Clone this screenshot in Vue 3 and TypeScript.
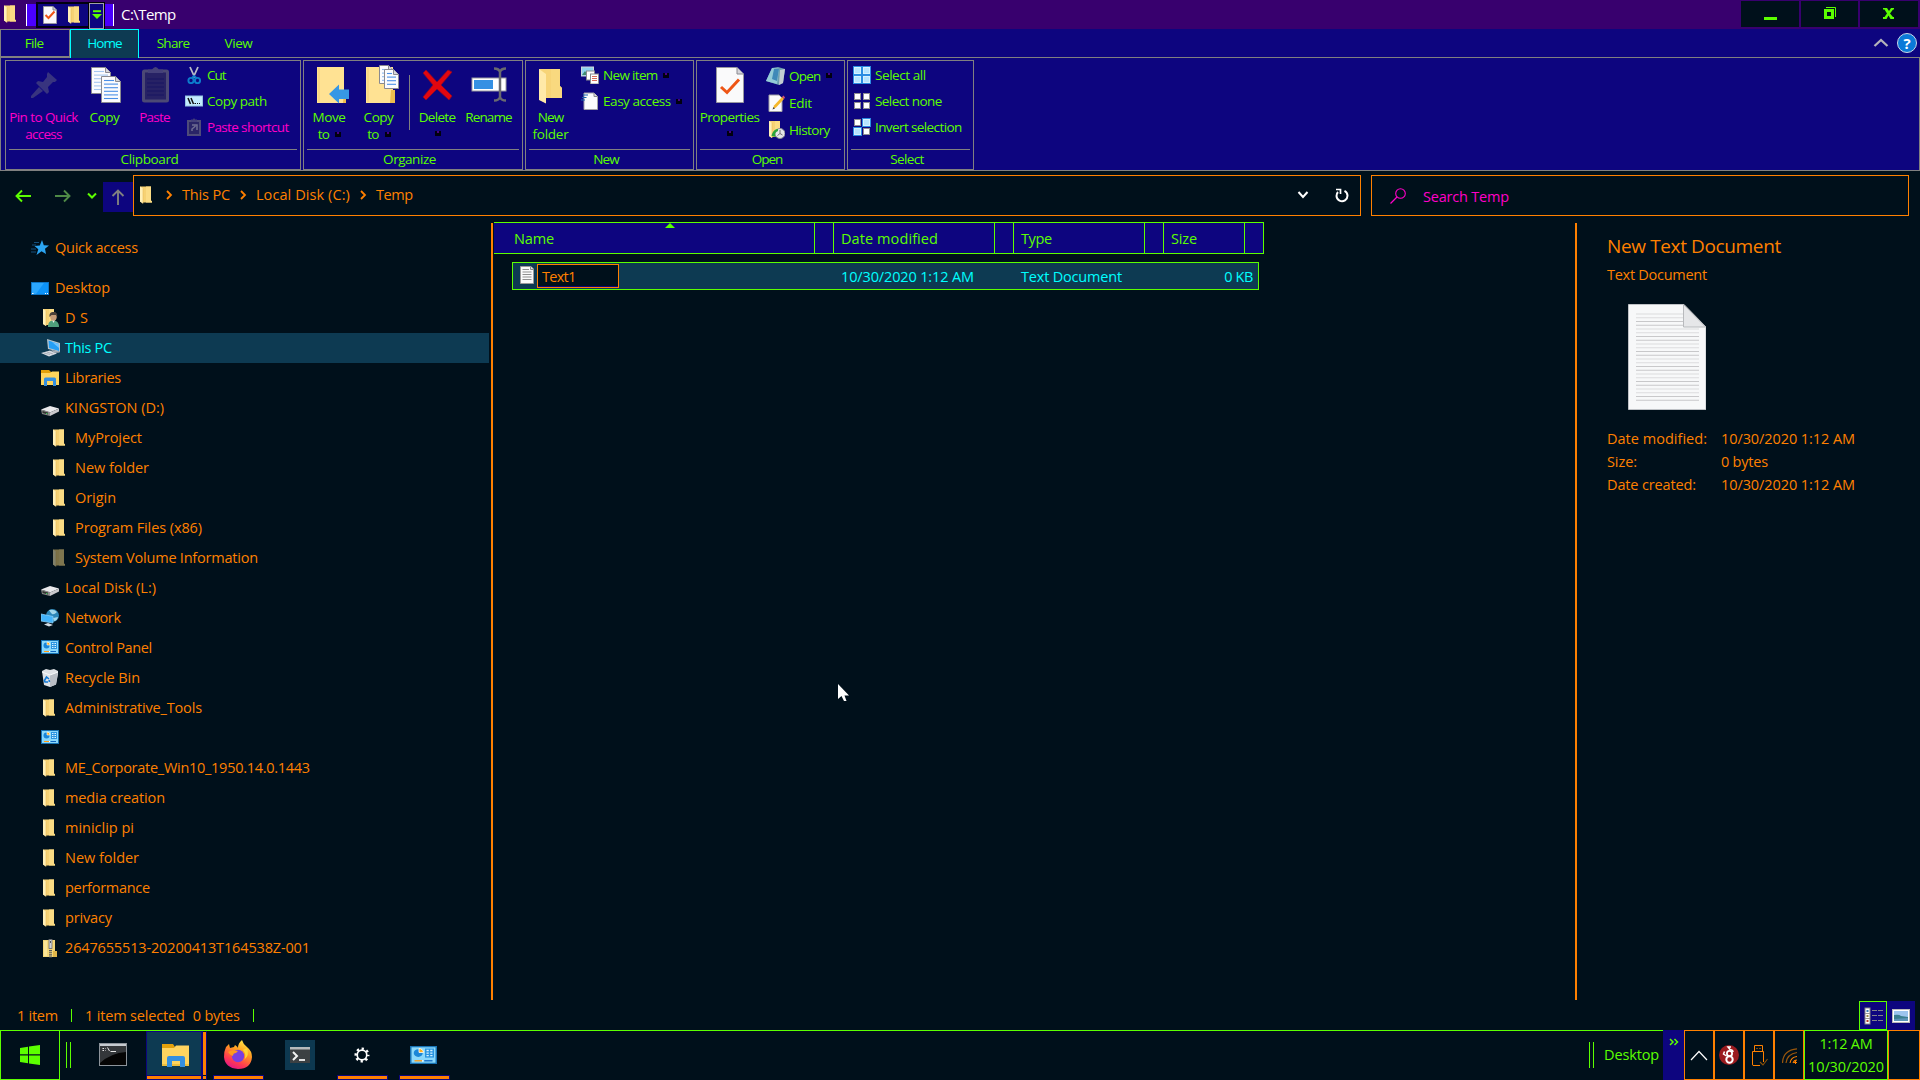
<script setup lang="ts">
import { h } from 'vue'

interface Art { w: number; h: number; body: string }

const folder = `<path d="M1 0H12V14L13 15V16H4V17L1 15Z" fill="#f6d274"/><path d="M7 0H12V14L13 15V16H7Z" fill="#fbdc84"/><path d="M1 0L4 2V17L1 15Z" fill="#fff0b8"/><path d="M4 2V17" stroke="#e9bd58" stroke-width=".6"/>`
const panel = `<rect width="18" height="14" fill="#1873b4"/><rect x="1" y="1" width="16" height="12" fill="#8ad8fb"/><circle cx="5.5" cy="5.5" r="3" fill="#1a86d8"/><path d="M6 5V2A3 3 0 0 1 9 5Z" fill="#ffae1a" stroke="#fff" stroke-width=".6"/><rect x="10" y="2" width="6" height="7" fill="#2a94e0"/><path d="M11 3.5h1.5M13.5 3.5H15M11 5.5h1.5M13.5 5.5H15M11 7.5h1.5M13.5 7.5H15" stroke="#d8f3ff"/><path d="M3 11.5H8" stroke="#ff9a10"/><path d="M8 11.5H9" stroke="#fff"/><path d="M9.500 11.500H15" stroke="#0f66c0"/>`
const drive = `<path d="M0 10.500L9 7L18 9.500L9 13.500Z" fill="#e9e9ec"/><path d="M0 10.500L9 13V17L1 15Z" fill="#8b8b8b"/><path d="M9 13.500L18 9.500V12.500L9 17Z" fill="#c9c9cd"/><path d="M1.500 12L7 13.500V15.500L1.500 14Z" fill="#303430"/><rect x="5" y="14" width="1.500" height="1" fill="#3fbf5a"/>`
const page = (x: number, y: number, w: number, hh: number, line: string) => {
  let s = `<path d="M${x} ${y}H${x + w - 5}L${x + w} ${y + 5}V${y + hh}H${x}Z" fill="#fbfbfd" stroke="#8a8a90"/><path d="M${x + w - 5} ${y}V${y + 5}H${x + w}" fill="#d6d6dc" stroke="#8a8a90"/>`
  for (let i = 0; i < 6; i++) {
    const ly = y + 4 + i * 3.6
    if (ly < y + hh - 1) s += `<path d="M${x + 2.5} ${ly}H${x + w - (i < 1 ? 6.5 : 2.5)}" stroke="${line}" stroke-width="1.100"/>`
  }
  return s
}
const sheetLines = Array.from({ length: 24 }, (_, i) =>
  `<path d="M8 ${10 + i * 3.75}H${i < 4 ? 55 : 71}" stroke="${i % 4 < 2 ? '#dcdcde' : '#c8c8ca'}" stroke-width="1.200"/>`).join('')
const pane = (x: number, y: number, on: boolean) => on
  ? `<rect x="${x}" y="${y}" width="9" height="9" fill="#2b8ce2"/><rect x="${x + 1.500}" y="${y + 1.500}" width="6" height="6" fill="#b6e4ff" stroke="#d4f1ff" stroke-width="1"/>`
  : `<rect x="${x + 1.500}" y="${y + 1.500}" width="6" height="6" fill="#fff" stroke="#8e8e92" stroke-width="1"/>`

const art: Record<string, Art> = {
  folder: { w: 18, h: 18, body: `<g transform="translate(1 0.500)">${folder}</g>` },
  sysfolder: { w: 18, h: 18, body: `<g transform="translate(1 0.500)" opacity=".5">${folder}</g>` },
  star: { w: 18, h: 18, body: `<path d="M11 1L12.800 6.300L18 6.500L14 9.700L15 15L10.500 12.200L5.500 16L7.300 10.300L3.500 7L8.800 6.500Z" fill="#2ba5f3"/><path d="M3 3.500H8M1 6H5M0 10H5M0 13H5" stroke="#1b5f96" stroke-width=".8"/>` },
  desktop: { w: 18, h: 18, body: `<rect x="0" y="3" width="18" height="13" fill="#0d74c4"/><rect x="1" y="4" width="16" height="11" fill="#0d93f8"/><path d="M1 4H13L5 15H1Z" fill="#2ba6fd"/><path d="M1 14.500H2.500M14 14.500H15M16 14.500H17" stroke="#fff"/>` },
  user: { w: 18, h: 18, body: `<g transform="translate(1 0)">${folder}</g><path d="M7 18C7 13 9 11.500 12.500 11.500S18 14 18 18Z" fill="#4e9e7c"/><path d="M11 11L12.500 14L14 11Z" fill="#e9f0ec"/><ellipse cx="12.500" cy="7.500" rx="3.300" ry="4.200" fill="#c69c78"/><path d="M8.500 8C8 4 10 3 12.500 3S17 5 16 8L15 6H10.500Z" fill="#4b4038"/>` },
  pc: { w: 20, h: 18, body: `<path d="M6 0L19 4V13L7 10Z" fill="#b9c6ce"/><path d="M7.500 1.500L18 5V12L8 9Z" fill="#259ff6"/><path d="M11 3L18 5V9Z" fill="#70c3ff"/><path d="M0 14L9 11.500L16 14.500L8 17.500Z" fill="#d8dbe2"/><path d="M10 11L17 12L19 13.500L13 14Z" fill="#a9b0b8"/><path d="M3 14L9 15.500M6 13L12 15" stroke="#8c949c" stroke-width=".6"/>` },
  library: { w: 18, h: 18, body: `<path d="M0 1H8L10 3H18V7H0Z" fill="#e2a10b"/><path d="M0 4H9L11 2.500H18V16H0Z" fill="#fdd45c"/><path d="M3 17V10Q3 8.500 4.500 8.500H13.500Q15 8.500 15 10V17H12V12H6V17Z" fill="#348fdf"/>` },
  drive: { w: 18, h: 18, body: drive },
  network: { w: 18, h: 18, body: `<circle cx="11.500" cy="6.500" r="6.500" fill="#2d87b8"/><path d="M8 1Q13 0 16 3Q13 6 11 5Q9 3 8 1M12 9L17 8Q16 12 13 12Z" fill="#a2d7ea"/><path d="M0 5L12 7.500V14L0 12Z" fill="#42b3fb"/><path d="M0 5L12 7.500V14L0 12Z" fill="none" stroke="#87cdf6" stroke-width=".8"/><path d="M3 15.500L7 14L12 16L8 17.500Z" fill="#d3dce4"/>` },
  panel: { w: 18, h: 18, body: `<g transform="translate(0 1)">${panel}</g>` },
  panelbig: { w: 27, h: 18, body: `<g transform="scale(1.500 1.286)">${panel}</g>` },
  bin: { w: 18, h: 18, body: `<path d="M1 2L5 0L9 1L13 0L17 2V5L15 15.500L9 18L3 16Z" fill="#dfe2e6"/><path d="M9 6L17 3L15 15.500L9 18Z" fill="#b9bec5"/><path d="M1 3L9 6L17 3" stroke="#f8fafb" stroke-width="1" fill="none"/><path d="M3.500 11.500L5.500 8L8 10M7 13H4L3 11M8 11L8.500 13" stroke="#1479d4" stroke-width="1.600" fill="none"/>` },
  zip: { w: 18, h: 19, body: `<rect x="2" y="1" width="12" height="17" fill="#f3d677"/><path d="M12 12H16V18H12Z" fill="#dfb54a"/><rect x="3" y="2" width="3" height="15" fill="#fbe597"/><path d="M9.500 9V19" stroke="#55565c" stroke-width="3" stroke-dasharray="1.100 1"/><rect x="8" y=".5" width="3" height="9" fill="#cfd2d6" stroke="#6b6d72" stroke-width=".8"/><path d="M9.500 2V4" stroke="#55565c"/>` },
  pin: { w: 40, h: 40, body: `<g fill="#38347f"><path d="M24 7L33 15L31 17H29L24 22L25 27L23 29L12 18L14 16L19 17L23 12V9Z"/><path d="M15 22L19 26L9 33L7 33L7 31Z"/></g>` },
  copy: { w: 40, h: 40, body: page(6.5, 2.5, 19, 26, '#a4c6f0') + page(16.5, 11.5, 19, 26, '#4b8fe6') },
  paste: { w: 40, h: 40, body: `<rect x="8.500" y="6" width="24" height="30" rx="1" fill="#272265" stroke="#4c4975" stroke-width="3"/><path d="M13 8V4.500H17Q20.500 -.5 24 4.500H28V8Z" fill="#45417a"/><path d="M12 14H29M12 18H29M12 22H29M12 26H29M12 30H29" stroke="#181462"/>` },
  move: { w: 40, h: 40, body: `<path d="M7 2H34V25H36V38H7Z" fill="#ffe293"/><path d="M34 25H36V38H33Z" fill="#edbd4e"/><path d="M9 3V37" stroke="#f6cf72" stroke-width="1"/><path d="M19 29L29 19.500V24.500H39V34H29V38.500Z" fill="#3797e4"/>` },
  copyto: { w: 40, h: 40, body: `<path d="M7 2H34V25H36V38H7Z" fill="#ffe293"/><path d="M32 25H36V38H31Z" fill="#edbd4e"/><path d="M9 3V37" stroke="#f6cf72"/>` + page(20.5, .5, 14, 18, '#8db8ee') + page(25.5, 4.5, 14, 19, '#4b8fe6') },
  del: { w: 40, h: 40, body: `<path d="M5 8L8 5L19 17L30 5L34 7L23 20L34 31L31 35L19 24L8 35L5 32L15 20Z" fill="#e3060f" stroke="#8c0a27" stroke-width=".8"/>` },
  rename: { w: 40, h: 40, body: `<rect x="3" y="13" width="34" height="13" fill="#fff" stroke="#9a9aa0"/><rect x="5" y="15" width="19" height="9" fill="#3590e3"/><path d="M25 3.500Q30 3.500 31 7Q32 3.500 37 3.500M31 6V32M25 35.500Q30 35.500 31 32Q32 35.500 37 35.500" fill="none" stroke="#696970" stroke-width="2.500"/>` },
  newfolder: { w: 40, h: 40, body: `<path d="M8 4H29V21L31 23V33H15V38L8 34Z" fill="#f7d477"/><path d="M20 4H29V21L31 23V33H20Z" fill="#f9d97f"/><path d="M8 4L15 9V38.500L8 35Z" fill="#ffe9a8"/>` },
  props: { w: 40, h: 40, body: `<path d="M6.500 2.500H27L33.500 9V37.500H6.500Z" fill="#fafafb" stroke="#9898a0"/><path d="M27 2.500V9H33.500" fill="#d4d4da" stroke="#8a8a90"/><path d="M11 22L17 27.500L29 14.500" fill="none" stroke="#ee5515" stroke-width="3"/>` },
  cut: { w: 18, h: 18, body: `<path d="M5 1L10 12M13 1L8 12" stroke="#b8bcc8" stroke-width="1.800"/><g fill="none" stroke="#0c7ccc" stroke-width="1.900"><circle cx="6" cy="14.500" r="2.600"/><circle cx="12.500" cy="14.500" r="2.600"/><path d="M7 12L9 10L11.500 12"/></g>` },
  path: { w: 18, h: 18, body: `<rect x=".5" y="4" width="17" height="10" fill="#c4ecff" stroke="#96c5e4"/><path d="M3 6L5.500 12M6 6L8.500 12" stroke="#111" stroke-width="1.500"/><path d="M9.500 11.500H11M12 11.500H13M14 11.500H15" stroke="#111"/>` },
  shortcut: { w: 18, h: 18, body: `<rect x="3" y="3" width="12" height="14" fill="#2a2567" stroke="#4e4b79" stroke-width="2"/><path d="M6 4V1.500H8L9 0L10 1.500H12V4Z" fill="#45417a"/><path d="M7 13V11L10.500 8M7 7H12V12" stroke="#6f6d92" stroke-width="1.500" fill="none"/>` },
  newitem: { w: 18, h: 18, body: `<rect x=".5" y="1" width="12" height="9" fill="#8fd2ee" stroke="#cfd6da"/><path d="M1 9L4 5L7 9Z" fill="#3f8a70"/><rect x="5.500" y="5" width="8" height="9" fill="#fff" stroke="#8a8a90"/><rect x="9.500" y="8" width="8" height="10" fill="#fff" stroke="#8a8a90"/><path d="M11 10.500H16M11 12.500H16M11 14.500H16" stroke="#d96a5a"/>` },
  easy: { w: 18, h: 18, body: `<path d="M3 1H13L16.500 4.500V17.500H3Z" fill="#fafbfc" stroke="#a0a0a6"/><path d="M13 1V4.500H16.500" fill="#ddd" stroke="#8a8a90"/><path d="M2 3H7M1 5.500H5.500M0 8H4" stroke="#1b62ad" stroke-width="1.200"/>` },
  open: { w: 20, h: 18, body: `<path d="M6 1L12 0L19 2L17 16L13 18L0 14Z" fill="#6d9fb0"/><path d="M6 1L13 2L11 17L0 14Z" fill="#94cbd8"/><path d="M8 2L13 2L11 14L6 12Z" fill="#3f89b8"/><path d="M14 3L19 2L17 16L13 18Z" fill="#c3cdd2"/>` },
  edit: { w: 18, h: 18, body: `<path d="M2 1H12L15 4V17.500H2Z" fill="#fafafb" stroke="#a0a0a6"/><path d="M6 15L7 11.500L15 3L17 5L9 13.500Z" fill="#f5b72a"/><path d="M15 3L16.500 1.500L18 3.500L17 5Z" fill="#d9536d"/><path d="M5.500 15.500L6.500 13L8 14.500Z" fill="#444"/>` },
  history: { w: 18, h: 18, body: `<g transform="translate(1 0)">${folder}</g><circle cx="13" cy="12.500" r="5" fill="#e4e6e8" stroke="#8a8e92"/><path d="M13 9V12.500L15.500 14M13 12.500L10.500 14.500" stroke="#666" stroke-width=".9" fill="none"/><path d="M5 13Q7 8 11 8V10Q8 11 8 14L9 16L4.500 15Z" fill="#2ca53a"/>` },
  selall: { w: 18, h: 18, body: pane(0, 0, true) + pane(9, 0, true) + pane(0, 9, true) + pane(9, 9, true) },
  selnone: { w: 18, h: 18, body: pane(0, 0, false) + pane(9, 0, false) + pane(0, 9, false) + pane(9, 9, false) },
  selinv: { w: 18, h: 18, body: pane(0, 0, false) + pane(9, 0, true) + pane(0, 9, true) + pane(9, 9, false) },
  propsmall: { w: 16, h: 18, body: `<path d="M1.500 .5H11L14.500 4V17.500H1.500Z" fill="#fafafb" stroke="#9898a0"/><path d="M11 .5V4H14.500" fill="#ccc" stroke="#8a8a90"/><path d="M3.500 9L6.500 12L12.500 5.500" fill="none" stroke="#ee5515" stroke-width="2"/>` },
  txt: { w: 14, h: 18, body: `<path d="M.5 .5H11L13.500 3V17.500H.5Z" fill="#fafafa" stroke="#9a9a9a"/><path d="M10.500 .5V3.500H13.500" fill="#ddd" stroke="#888"/><path d="M2.500 3.500H9M2.500 6H11.500M2.500 8.500H11.500M2.500 11H11.500M2.500 13.500H11.500" stroke="#8f8f8f"/>` },
  sheet: { w: 78, h: 106, body: `<path d="M.5 .5H56L78 23V105.500H.5Z" fill="#f7f8f9" stroke="#bfc2c6"/>${sheetLines}<path d="M55.500 .5L77.500 23H55.500Z" fill="#e6e7e9" stroke="#b8babd"/>` },
  cmd: { w: 28, h: 23, body: `<rect x=".5" y=".5" width="27" height="22" fill="#050505" stroke="#8d949b"/><rect x="1" y="1" width="26" height="2" fill="#c6cbd0"/><path d="M1 3H27V9Q12 10 1 20Z" fill="#34373a"/><path d="M3.500 5.500H5M3.500 7.500H5M6.500 5.500V6M6.500 7.500V8M8.500 4.500L10.500 8M11.500 8.500H17" stroke="#e8e8e8" stroke-width="1"/>` },
  explorer: { w: 28, h: 24, body: `<path d="M1 1H12L14 4H28V10H1Z" fill="#e2a10b"/><path d="M1 5H13L15 2.500H28V23H1Z" fill="#fed45f"/><path d="M1 21H28V23H1Z" fill="#eebf3d"/><path d="M6 24V15Q6 13 8 13H22Q24 13 24 15V24H19V18H11V24Z" fill="#348fdf"/>` },
  firefox: { w: 30, h: 30, body: `<defs><linearGradient id="ffa" x1=".8" y1="0" x2=".3" y2="1"><stop offset="0" stop-color="#fff14a"/><stop offset=".4" stop-color="#ff9a20"/><stop offset=".75" stop-color="#ff3b50"/><stop offset="1" stop-color="#e31587"/></linearGradient></defs><path d="M3 7L6 4L7 8L11 7L12 5Q15 7 15 8Q15 3 19 0Q20 4 24 7Q29 11 29 17Q28 29 15 29Q2 28 1 17Q1 11 3 7Z" fill="url(#ffa)"/><circle cx="15" cy="16" r="6.200" fill="#7a3fe0"/><path d="M5 12Q9 9 15 11L13 13Q10 13 10 16Q7 15 5 12Z" fill="#ff9a1e"/><path d="M20 10Q24 15 21 20Q27 15 24 8Z" fill="#ffd633"/>` },
  powershell: { w: 30, h: 30, body: `<rect width="30" height="30" fill="#0d3850"/><rect x="5" y="7" width="20" height="16" fill="#3c4043"/><rect x="5" y="7" width="20" height="2.500" fill="#b5b9bc"/><path d="M8 12L12 16L8 20" fill="none" stroke="#f2f2f2" stroke-width="2"/><path d="M14 20H20" stroke="#f2f2f2" stroke-width="1.800"/>` },
  gear: { w: 16, h: 16, body: `<circle cx="8" cy="8" r="4.800" fill="none" stroke="#fff" stroke-width="1.700"/><circle cx="8" cy="8" r="6.300" fill="none" stroke="#fff" stroke-width="2.400" stroke-dasharray="2.300 2.650" stroke-dashoffset="1.150"/>` },
  win: { w: 20, h: 20, body: `<path d="M0 3L8 1.800V9.300H0ZM9 1.600L20 0V9.300H9ZM0 10.500H8V18.200L0 17ZM9 10.500H20V20L9 18.400Z" fill="#5cff00"/>` },
  back: { w: 16, h: 14, body: `<path d="M16 7H2M7 1.500L1.500 7L7 12.500" fill="none" stroke="#5cff00" stroke-width="1.900"/>` },
  fwd: { w: 16, h: 14, body: `<path d="M0 7H14M9 1.500L14.500 7L9 12.500" fill="none" stroke="#4f8a46" stroke-width="1.900"/>` },
  down: { w: 10, h: 8, body: `<path d="M1 1.500L5 5.500L9 1.500" fill="none" stroke="#5cff00" stroke-width="2"/>` },
  up: { w: 14, h: 16, body: `<path d="M7 16V2M1.500 7L7 1.500L12.500 7" fill="none" stroke="#808080" stroke-width="1.900"/>` },
  crumb: { w: 7, h: 10, body: `<path d="M1 1L5 5L1 9" fill="none" stroke="#ff8000" stroke-width="1.800"/>` },
  drop: { w: 12, h: 10, body: `<path d="M1.500 2L6 7L10.500 2" fill="none" stroke="#fff" stroke-width="2"/>` },
  refresh: { w: 14, h: 15, body: `<path d="M3 4Q1.500 5.500 1.500 8A5.500 5.500 0 1 0 9.500 2.800" fill="none" stroke="#fff" stroke-width="2"/><path d="M1 1.500H5.500V6" fill="none" stroke="#fff" stroke-width="1.700"/>` },
  search: { w: 16, h: 16, body: `<circle cx="10.500" cy="5.500" r="4.800" fill="none" stroke="#ff00c8" stroke-width="1.100"/><path d="M7 9L.5 15.500" stroke="#ff00c8" stroke-width="1.200"/>` },
  qat: { w: 10, h: 9, body: `<path d="M1 1.200H9" stroke="#5cff00" stroke-width="2"/><path d="M0 4H10L5 9Z" fill="#5cff00"/>` },
  min: { w: 14, h: 14, body: `<path d="M1 11H14V14H1Z" fill="#5cff00"/>` },
  restore: { w: 13, h: 13, body: `<path d="M2 .5H11.500V10" fill="none" stroke="#5cff00"/><path d="M1.500 3.500H8.500V10.500H1.500Z" fill="none" stroke="#5cff00" stroke-width="3"/>` },
  close: { w: 12, h: 11, body: `<path d="M0 0H4L6 3L8 0H11V1.500H10L7 5.500L10 9H11V11H7.500L5.500 7.500L3.500 11H0V9H1.500L4 5.500L1.500 1.500H0Z" fill="#5cff00"/>` },
  caret: { w: 16, h: 10, body: `<path d="M1.500 8L8 2L14.500 8" fill="none" stroke="#b4b4ba" stroke-width="2.300"/>` },
  chev: { w: 18, h: 11, body: `<path d="M1 10L9 1.500L17 10" fill="none" stroke="#fff" stroke-width="1.200"/>` },
  more: { w: 10, h: 8, body: `<path d="M1 1L4 4L1 7M5.500 1L8.500 4L5.500 7" fill="none" stroke="#5cff00" stroke-width="1.500"/>` },
  swirl: { w: 20, h: 20, body: `<circle cx="10" cy="10" r="10" fill="#9b1b1f"/><circle cx="10.500" cy="14.500" r="3.200" fill="none" stroke="#fff" stroke-width="2"/><circle cx="10.500" cy="8.500" r="2.600" fill="none" stroke="#fff" stroke-width="1.800"/><path d="M12 2H9L11 4.500Q14 5 14 7M5.500 6.500L4.500 9L7.500 11" fill="none" stroke="#fff" stroke-width="1.500"/>` },
  usb: { w: 16, h: 21, body: `<path d="M2.500 6V.5H10.500V6M1 20.500Q.5 20.500 .5 19V6.500H11.500V17M1 20.500H8" fill="none" stroke="#ff8000"/><path d="M4.500 3.500H5.500M7.500 3.500H8.500" stroke="#ff8000"/><path d="M8 17L11 20L15.500 14" fill="none" stroke="#8d5208" stroke-width="1.100"/>` },
  wifi: { w: 16, h: 16, body: `<g fill="none" stroke="#9a570c" stroke-width="1.200"><path d="M.5 15Q1 2 15 .8M4 15Q5 6 15 4.500"/></g><path d="M8 15Q9 9 15 8.500M11 15Q12 12 15 12" fill="none" stroke="#ff8000" stroke-width="1.100"/><path d="M12 14.500H15M13.500 13V16" stroke="#ff8000"/>` },
  details: { w: 20, h: 18, body: `<g><rect x="1" y="1" width="5" height="16" fill="#fff" stroke="#888"/><path d="M1 6.500H6M1 11.500H6" stroke="#999"/><rect x="2.500" y="3" width="2" height="2" fill="#3a7fb8"/><rect x="2.500" y="8" width="2" height="2" fill="#9a8a4a"/><rect x="2.500" y="13" width="2" height="2" fill="#b03a2a"/></g><path d="M8 3.500H13M14 3.500H19M8 8.500H13M14 8.500H19M8 13.500H13M14 13.500H19" stroke="#82828c"/>` },
  thumb: { w: 18, h: 14, body: `<rect x=".5" y=".5" width="17" height="13" fill="#fff" stroke="#b8b8b8"/><rect x="2" y="2" width="14" height="10" fill="#9cc5ee"/><path d="M2 6Q7 5 9 7L16 8V12H2Z" fill="#3a7f8f"/><path d="M2 10L16 9V12H2Z" fill="#5c95b8"/>` },
  cursor: { w: 12, h: 18, body: `<path d="M0 0V15L3.500 12L6 17H8.500L6.500 11.500H11Z" fill="#fff"/>` },
}

// Renders one glyph from the table above at its own size.
const Ico = (p: { n: string }) => {
  const a = art[p.n]
  return h('svg', { width: a.w, height: a.h, viewBox: `0 0 ${a.w} ${a.h}`, 'aria-hidden': 'true', innerHTML: a.body })
}
Ico.props = ['n']

// Spreads a label's letters so that it takes up the given advance in pixels.
const vFit = {
  mounted(el: HTMLElement, { value }: { value: number }) {
    if (!value) return
    const range = document.createRange()
    range.selectNodeContents(el)
    const natural = range.getBoundingClientRect().width
    const count = (el.textContent ?? '').length
    if (count > 1) el.style.letterSpacing = `${((value - 1 - natural) / (count - 0.5)).toFixed(3)}px`
  },
}

type T = [string, number]
interface Big { icon: string; lines: T[]; width: number; off?: boolean; tick?: 'inline' | 'below'; sep?: boolean }
interface Small { icon: string; t: T; off?: boolean; tick?: boolean }
interface Group { title: T; width: number; pad: number; big: Big[]; gap: number; rowH: number; small: Small[] }

const groups: Group[] = [
  { title: ['Clipboard', 59], width: 296, pad: 0, gap: 3, rowH: 26,
    big: [
      { icon: 'pin', lines: [['Pin to Quick', 70], ['access', 38]], width: 76, off: true },
      { icon: 'copy', lines: [['Copy', 31]], width: 46 },
      { icon: 'paste', lines: [['Paste', 32]], width: 54, off: true },
    ],
    small: [
      { icon: 'cut', t: ['Cut', 20] },
      { icon: 'path', t: ['Copy path', 61] },
      { icon: 'shortcut', t: ['Paste shortcut', 83], off: true },
    ] },
  { title: ['Organize', 54], width: 220, pad: 2, gap: 0, rowH: 26,
    big: [
      { icon: 'move', lines: [['Move', 34], ['to', 13]], width: 47, tick: 'inline' },
      { icon: 'copyto', lines: [['Copy', 31], ['to', 13]], width: 52, tick: 'inline', sep: true },
      { icon: 'del', lines: [['Delete', 38]], width: 55, tick: 'below' },
      { icon: 'rename', lines: [['Rename', 48]], width: 48 },
    ],
    small: [] },
  { title: ['New', 27], width: 169, pad: 1, gap: 6, rowH: 26,
    big: [{ icon: 'newfolder', lines: [['New', 27], ['folder', 37]], width: 48 }],
    small: [
      { icon: 'newitem', t: ['New item', 56], tick: true },
      { icon: 'easy', t: ['Easy access', 69], tick: true },
    ] },
  { title: ['Open', 32], width: 149, pad: 1, gap: 5, rowH: 27,
    big: [{ icon: 'props', lines: [['Properties', 61]], width: 64, tick: 'below' }],
    small: [
      { icon: 'open', t: ['Open', 33], tick: true },
      { icon: 'edit', t: ['Edit', 24] },
      { icon: 'history', t: ['History', 42] },
    ] },
  { title: ['Select', 35], width: 127, pad: 5, gap: 0, rowH: 26,
    big: [],
    small: [
      { icon: 'selall', t: ['Select all', 52] },
      { icon: 'selnone', t: ['Select none', 68] },
      { icon: 'selinv', t: ['Invert selection', 88] },
    ] },
]

interface Node { icon: string; t: T; level: number; on?: boolean }
const tree: Node[] = [
  { icon: 'star', t: ['Quick access', 84], level: 0 },
  { icon: 'desktop', t: ['Desktop', 56], level: 0 },
  { icon: 'user', t: ['D S', 24], level: 1 },
  { icon: 'pc', t: ['This PC', 48], level: 1, on: true },
  { icon: 'library', t: ['Libraries', 57], level: 1 },
  { icon: 'drive', t: ['KINGSTON (D:)', 100], level: 1 },
  { icon: 'folder', t: ['MyProject', 68], level: 2 },
  { icon: 'folder', t: ['New folder', 75], level: 2 },
  { icon: 'folder', t: ['Origin', 42], level: 2 },
  { icon: 'folder', t: ['Program Files (x86)', 128], level: 2 },
  { icon: 'sysfolder', t: ['System Volume Information', 184], level: 2 },
  { icon: 'drive', t: ['Local Disk (L:)', 92], level: 1 },
  { icon: 'network', t: ['Network', 57], level: 1 },
  { icon: 'panel', t: ['Control Panel', 88], level: 1 },
  { icon: 'bin', t: ['Recycle Bin', 76], level: 1 },
  { icon: 'folder', t: ['Administrative_Tools', 138], level: 1 },
  { icon: 'panel', t: ['', 0], level: 1 },
  { icon: 'folder', t: ['ME_Corporate_Win10_1950.14.0.1443', 246], level: 1 },
  { icon: 'folder', t: ['media creation', 101], level: 1 },
  { icon: 'folder', t: ['miniclip pi', 70], level: 1 },
  { icon: 'folder', t: ['New folder', 75], level: 1 },
  { icon: 'folder', t: ['performance', 86], level: 1 },
  { icon: 'folder', t: ['privacy', 48], level: 1 },
  { icon: 'zip', t: ['2647655513-20200413T164538Z-001', 246], level: 1 },
]

const crumbs: T[] = [['This PC', 49], ['Local Disk (C:)', 95], ['Temp', 38]]
const facts: { k: T; v: T }[] = [
  { k: ['Date modified:', 101], v: ['10/30/2020 1:12 AM', 135] },
  { k: ['Size:', 31], v: ['0 bytes', 48] },
  { k: ['Date created:', 90], v: ['10/30/2020 1:12 AM', 135] },
]
</script>

<template>
  <div class="window">
    <header class="titlebar">
      <Ico n="folder" class="appicon" />
      <div class="qat">
        <div class="qat-tools"><Ico n="propsmall" /><Ico n="folder" /></div>
        <div class="qat-menu"><Ico n="qat" /></div>
      </div>
      <span v-fit="56" class="caption">C:\Temp</span>
      <div class="winbtns">
        <div class="wb"><Ico n="min" /></div>
        <div class="wb mid"><Ico n="restore" /></div>
        <div class="wb"><Ico n="close" /></div>
      </div>
    </header>

    <nav class="tabs">
      <div class="tab file"><span v-fit="20">File</span></div>
      <div class="tab home"><span v-fit="36">Home</span></div>
      <div class="tab share"><span v-fit="34">Share</span></div>
      <div class="tab view"><span v-fit="29">View</span></div>
      <div class="tabtools">
        <Ico n="caret" />
        <span class="help">?</span>
      </div>
    </nav>

    <section class="ribbon">
      <div v-for="g in groups" :key="g.title[0]" class="group" :style="{ width: g.width + 'px' }">
        <div class="gbody" :style="{ paddingLeft: g.pad + 'px' }">
          <template v-for="b in g.big" :key="b.icon">
            <div class="big" :class="{ off: b.off }" :style="{ width: b.width + 'px' }">
              <Ico :n="b.icon" />
              <div v-for="(l, i) in b.lines" :key="i" class="lbl" :class="{ first: i === 0 }">
                <span v-fit="l[1]">{{ l[0] }}</span>
                <i v-if="b.tick === 'inline' && i === 1" class="tick" />
              </div>
              <div v-if="b.tick === 'below'" class="lbl"><i class="tick alone" /></div>
            </div>
            <div v-if="b.sep" class="vsep" />
          </template>
          <div v-if="g.small.length" class="smalls" :style="{ marginLeft: g.gap + 'px' }">
            <div v-for="s in g.small" :key="s.icon" class="small" :class="{ off: s.off }" :style="{ height: g.rowH + 'px' }">
              <div class="sic"><Ico :n="s.icon" /></div>
              <span v-fit="s.t[1]">{{ s.t[0] }}</span>
              <i v-if="s.tick" class="tick" />
            </div>
          </div>
        </div>
        <div class="gtitle"><span v-fit="g.title[1]">{{ g.title[0] }}</span></div>
      </div>
    </section>

    <section class="navbar">
      <div class="arrows">
        <Ico n="back" /><Ico n="fwd" class="a2" /><Ico n="down" class="a3" />
      </div>
      <div class="upbtn"><Ico n="up" /></div>
      <div class="address">
        <Ico n="folder" class="adr-ico" />
        <template v-for="c in crumbs" :key="c[0]">
          <Ico n="crumb" class="crumb" /><span v-fit="c[1]" class="ct">{{ c[0] }}</span>
        </template>
        <div class="adr-end"><Ico n="drop" /><Ico n="refresh" /></div>
      </div>
      <div class="search"><Ico n="search" /><span v-fit="87">Search Temp</span></div>
    </section>

    <main class="content">
      <aside class="tree">
        <div v-for="(n, i) in tree" :key="i" class="node" :class="['l' + n.level, { on: n.on, top: i === 0 }]">
          <div class="nic"><Ico :n="n.icon" /></div>
          <span v-fit="n.t[1]">{{ n.t[0] }}</span>
        </div>
      </aside>

      <section class="files">
        <div class="thead">
          <div class="th name"><span v-fit="41">Name</span><i class="sort" /></div>
          <div class="th gap" />
          <div class="th date"><span v-fit="98">Date modified</span></div>
          <div class="th gap" />
          <div class="th type"><span v-fit="32">Type</span></div>
          <div class="th gap" />
          <div class="th size"><span v-fit="27">Size</span></div>
          <div class="th gap" />
        </div>
        <div class="row">
          <Ico n="txt" class="rowicon" />
          <div class="rename"><span v-fit="35">Text1</span></div>
          <div class="c-date"><span v-fit="134">10/30/2020 1:12 AM</span></div>
          <div class="c-type"><span v-fit="102">Text Document</span></div>
          <div class="c-size"><span v-fit="30">0 KB</span></div>
        </div>
      </section>

      <aside class="details">
        <h1><span v-fit="175">New Text Document</span></h1>
        <p><span v-fit="101">Text Document</span></p>
        <Ico n="sheet" class="sheet" />
        <dl>
          <div v-for="f in facts" :key="f.k[0]" class="fact">
            <dt><span v-fit="f.k[1]">{{ f.k[0] }}</span></dt>
            <dd><span v-fit="f.v[1]">{{ f.v[0] }}</span></dd>
          </div>
        </dl>
      </aside>
      <Ico n="cursor" class="cursor" />
    </main>

    <footer class="status">
      <span v-fit="42" class="s1">1 item</span><i class="bar" />
      <span v-fit="101" class="s2">1 item selected</span>
      <span v-fit="48" class="s3">0 bytes</span><i class="bar" />
      <div class="views">
        <div class="vbtn act"><Ico n="details" /></div>
        <div class="vbtn"><Ico n="thumb" /></div>
      </div>
    </footer>

    <footer class="taskbar">
      <div class="start"><Ico n="win" /></div>
      <i class="grip" />
      <div class="task cmd"><Ico n="cmd" /></div>
      <div class="task exp"><Ico n="explorer" /></div>
      <div class="stack"><i /><b /></div>
      <div class="task run ff"><Ico n="firefox" /></div>
      <div class="task ps"><Ico n="powershell" /></div>
      <div class="task run gear"><Ico n="gear" /></div>
      <div class="task run cp"><Ico n="panelbig" /></div>
      <i class="grip right" />
      <span v-fit="56" class="desk">Desktop</span>
      <div class="more"><Ico n="more" /></div>
      <div class="tray"><Ico n="chev" /></div>
      <div class="tray"><Ico n="swirl" /></div>
      <div class="tray"><Ico n="usb" class="usb" /></div>
      <div class="tray"><Ico n="wifi" class="wifi" /></div>
      <div class="clock"><span v-fit="54">1:12 AM</span><span v-fit="77">10/30/2020</span></div>
      <div class="peek" />
    </footer>
  </div>
</template>

<style>
body { background: #00101b; overflow: hidden; }
</style>

<style scoped>
* { box-sizing: border-box; }
.window {
  width: 1920px; height: 1080px; display: flex; flex-direction: column; overflow: hidden;
  background: #00101b; color: #ff8000; white-space: pre;
  font: 14.5px/20px "Open Sans", "Noto Sans", sans-serif;
}
svg { display: block; flex: none; }

.titlebar { height: 29px; display: flex; background: #38006e; flex: none; }
.appicon { margin: 5px 0 0 2px; }
.qat { display: flex; margin: 4px 0 0 6px; width: 88px; height: 22px; background: #4a00ff; border: solid #fff; border-width: 0 1px; padding-left: 9px; }
.qat-tools { width: 53px; height: 26px; margin-top: -2px; background: #0d057f; border: 2px solid #000010; border-right: 0; display: flex; padding: 2px 0 0 4px; gap: 8px; }
.qat-menu { width: 15px; height: 26px; margin-top: -1px; border: 1px solid #a0a0a8; outline: 1px solid #000; background: #0d057f; display: flex; justify-content: center; padding-top: 6px; }
.caption { color: #fff; margin: 4px 0 0 7px; font-size: 15px; }
.winbtns { margin: 1px 2px 0 auto; display: flex; gap: 2px; }
.wb { width: 58px; height: 26px; background: #00101b; display: flex; align-items: center; justify-content: center; }
.wb svg { margin-top: -2px; }
.wb.mid { width: 57px; }
.wb.mid svg { margin: -1px 0 0 2px; }

.tabs { height: 29px; background: #0d057f; color: #5cff00; display: flex; flex: none; font-size: 13.5px; border-bottom: 1px solid #808080; }
.tab { height: 28px; line-height: 28px; text-align: center; }
.file { width: 70px; border: 1px solid #808080; line-height: 26px; }
.file span { margin-right: 2px; }
.home { width: 69px; height: 29px; background: #0d3a52; border: 1px solid #00ffff; border-bottom: 0; color: #00ffff; line-height: 26px; }
.share { width: 68px; }
.view { width: 63px; }
.tabtools { margin-left: auto; display: flex; align-items: center; padding-right: 3px; }
.tabtools svg { margin-right: 8px; }
.help { width: 20px; height: 20px; border-radius: 50%; border: 1px solid #c8d8e8; background: #0a7ad8; color: #fff; font: bold 15px/18px "Open Sans", sans-serif; text-align: center; }

.ribbon { height: 113px; flex: none; background: #0d057f; color: #5cff00; border: solid #808080; border-width: 0 1px 1px; padding: 2px 4px 0; display: flex; gap: 2px; font-size: 13.5px; line-height: 17px; }
.group { height: 110px; border: 1px solid #808080; display: flex; flex-direction: column; flex: none; }
.gbody { height: 88px; display: flex; }
.gtitle { margin: 0 3px; padding-right: 7px; border-top: 1px solid #808080; text-align: center; line-height: 19px; }
.off { color: #ff00c8; }
.big { display: flex; flex: none; flex-direction: column; align-items: center; padding-top: 4px; }
.lbl { height: 17px; display: flex; align-items: center; }
.lbl span { margin-right: 1px; }
.lbl.first { margin-top: 4px; }
.tick { width: 6px; height: 5px; margin-left: 5px; background: linear-gradient(#4a0080, #4a0080) 50% 0 / 2px 2px no-repeat #000010; flex: none; }
.tick.alone { margin: -2px 0 0; }
.vsep { width: 1px; height: 55px; margin: 14px 0 0 4px; background: #808080; flex: none; }
.smalls { padding-top: 1px; flex: none; }
.small { display: flex; align-items: center; }
.small span { padding-top: 1px; }
.sic { width: 18px; display: flex; justify-content: center; margin-right: 4px; }

.navbar { height: 51px; flex: none; display: flex; padding: 4px 11px 0 0; }
.arrows { width: 103px; display: flex; align-items: center; padding-left: 15px; height: 41px; }
.a2 { margin-left: 24px; }
.a3 { margin-left: 16px; }
.upbtn { width: 30px; height: 30px; margin-top: 7px; background: #0d057f; display: flex; align-items: center; justify-content: center; }
.address { width: 1228px; height: 41px; border: 1px solid #ff8000; display: flex; align-items: center; padding: 0 11px 2px 4px; }
.adr-ico { margin-right: 7px; }
.crumb { margin: 0 9px 0 3px; }
.ct { margin-right: 6px; padding-top: 1px; }
.ct + .crumb { margin-left: 4px; }
.adr-end { margin-left: auto; display: flex; align-items: center; gap: 26px; padding-top: 1px; }
.search { margin-left: 10px; width: 538px; height: 41px; border: 1px solid #ff8000; display: flex; align-items: center; padding-left: 18px; color: #ff00c8; }
.search span { margin-left: 17px; padding-top: 2px; }

.content { position: relative; height: 778px; flex: none; display: flex; padding-top: 1px; }
.tree { width: 491px; padding-top: 10px; }
.node { display: flex; align-items: center; height: 30px; width: 489px; }
.node.top { margin-bottom: 10px; }
.nic { width: 18px; margin-right: 6px; }
.l0 { padding-left: 31px; }
.l1 { padding-left: 41px; }
.l2 { padding-left: 51px; }
.on { background: #0d3a52; color: #00ffff; }
.files { width: 1086px; height: 777px; border: solid #ff8000; border-width: 0 2px; }
.thead { margin: -1px 0 0 1px; width: 770px; height: 32px; background: #0d057f; border: 1px solid #5cff00; border-left: 0; display: flex; color: #5cff00; }
.th { border-right: 1px solid #5cff00; line-height: 31px; padding-left: 7px; position: relative; flex: none; }
.th.name { width: 321px; padding-left: 20px; }
.th.gap { width: 19px; padding: 0; }
.th.gap:last-child { border: 0; width: 18px; }
.th.date { width: 161px; }
.th.type { width: 131px; }
.th.size { width: 81px; }
.sort { position: absolute; left: 171px; top: 0; border: solid transparent; border-width: 0 5px 5px; border-bottom-color: #5cff00; }
.row { margin: 8px 0 0 19px; width: 747px; height: 28px; border: 1px solid #5cff00; background: #0d3a52; color: #00ffff; display: flex; line-height: 28px; }
.rowicon { margin: 3px 0 0 7px; }
.rename { margin: 1px 0 0 3px; width: 82px; height: 24px; border: 1px solid #ff8000; background: #00101b; box-shadow: inset 0 -1px #0d057f; color: #ff8000; line-height: 23px; padding-left: 4px; }
.c-date { margin-left: 222px; width: 180px; }
.c-type { width: 180px; }
.c-size { margin-left: auto; margin-right: 5px; }

.details { padding-left: 30px; }
h1 { margin: 10px 0 0; font-size: 19px; font-weight: 400; line-height: 26px; }
p { margin: 6px 0 0; line-height: 20px; }
.sheet { margin: 19px 0 0 21px; }
dl { margin: 17px 0 0; }
.fact { display: flex; height: 23px; line-height: 23px; }
dt { width: 114px; }
dd { margin: 0; }
.cursor { position: absolute; left: 838px; top: 462px; }

.status { height: 30px; flex: none; display: flex; padding-left: 17px; }
.status span { line-height: 31px; }
.bar { width: 1px; height: 13px; margin: 9px 0 0 13px; background: #5cff00; }
.s2 { margin-left: 13px; }
.s3 { margin-left: 8px; }
.views { margin: 1px 5px 0 auto; display: flex; }
.vbtn { width: 28px; height: 29px; background: #0d057f; display: flex; align-items: center; justify-content: center; }
.vbtn.act { border: 1px solid #5cff00; padding-left: 1px; }

.taskbar { height: 50px; flex: none; display: flex; background: linear-gradient(#5cff00, #5cff00) 0 0 / 1663px 1px no-repeat; }
.start { width: 60px; border: 1px solid #5cff00; display: flex; align-items: center; justify-content: center; }
.grip { width: 5px; height: 26px; margin: 12px 0 0 6px; border: solid #5cff00; border-width: 0 1px; }
.task { height: 50px; display: flex; align-items: center; justify-content: center; position: relative; }
.cmd { width: 75px; }
.cmd svg { margin-left: 9px; margin-top: -1px; }
.exp { width: 56px; margin-top: 1px; height: 49px; background: #0d3a52; border: 1px solid #0d057f; border-bottom: 0; }
.exp svg { margin: -3px 0 0 2px; }
.exp::after, .run::after { content: ""; position: absolute; bottom: 1px; left: 0; width: 100%; height: 3px; background: #ff8000; outline: 1px solid #0d057f; }
.stack { width: 5px; height: 49px; margin-top: 1px; border: solid #0d057f; border-width: 0 1px; display: flex; flex-direction: column; gap: 1px; padding-top: 1px; }
.stack i { height: 43px; background: #ff8000; }
.stack b { height: 3px; background: #ff8000; }
.ff { width: 49px; margin-left: 7px; }
.ff svg { margin-right: 2px; }
.ps { width: 74px; }
.gear { width: 49px; margin-left: 1px; }
.gear svg { margin: -1px 2px 0 0; }
.cp { width: 49px; margin-left: 13px; }
.cp svg { margin-right: 2px; }
.grip.right { margin-left: auto; }
.desk { color: #5cff00; line-height: 50px; margin: 0 4px 0 10px; }
.more { width: 21px; background: #0d057f; padding: 8px 0 0 6px; }
.tray { width: 30px; border: 1px solid #ff8000; display: flex; align-items: center; justify-content: center; }
.usb { margin-left: 2px; }
.wifi { margin-top: 2px; margin-left: 1px; }
.clock { width: 84px; border: 1px solid #5cff00; color: #5cff00; display: flex; flex-direction: column; align-items: center; line-height: 23px; padding: 1px 0 0; }
.peek { width: 32px; border: 1px solid #ff8000; }
</style>
